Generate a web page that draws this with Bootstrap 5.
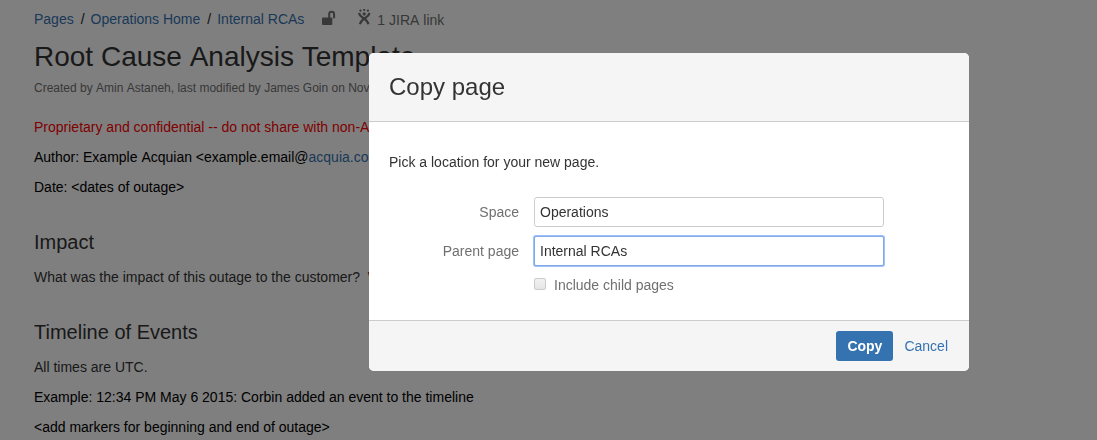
<!DOCTYPE html>
<html lang="en">
<head>
<meta charset="utf-8">
<meta name="viewport" content="width=device-width, initial-scale=1">
<title>Root Cause Analysis Template</title>
<link rel="stylesheet" href="https://cdn.jsdelivr.net/npm/bootstrap@5.3.0/dist/css/bootstrap.min.css">
<style>
  html, body { height: 100%; overflow: hidden; }
  body { font: 14px/20px "Liberation Sans", Arial, sans-serif; color: #333; background: #fff; }
  a { color: #3572b0; text-decoration: none; }
  .page { padding: 9px 34px 0; height: 440px; overflow: hidden; white-space: nowrap; }
  .page p { margin: 0 0 10px; }
  /* a space that is not kerned with the letters beside it */
  .sp { font-kerning: none; }
  .crumbs { --bs-breadcrumb-divider-color: #222; line-height: 20px; }
  .crumbs .breadcrumb-item + .breadcrumb-item { padding-left: 7px; }
  .crumbs .breadcrumb-item + .breadcrumb-item::before { padding-right: 6px; }
  .crumb-tools { color: #707070; }
  .jira-icon { margin-left: 21px; }
  .jira-count { padding-top: 1px; }
  .page-title { font-size: 28px; line-height: 34px; font-weight: 400; margin: 10px 0 0; }
  .page .page-meta { font-size: 12px; line-height: 16px; color: #707070; margin: 6px 0 21px; }
  .section-title { font-size: 20px; line-height: 30px; font-weight: 400; margin: 30px 0 10px; }
  .ink { color: #000; }
  .warn { color: #f00; }
  .modal-backdrop.show { opacity: .5; }
  .copy-dialog { width: 600px; max-width: none; margin: 53px 0 0 369px; }
  .copy-dialog .modal-content { border: 0; border-radius: 5px; overflow: hidden; height: 318px; color: #333; }
  .copy-dialog .modal-header { height: 69px; padding: 0 20px; background: #f5f5f5; border-bottom: 1px solid #ccc; border-radius: 0; }
  .copy-dialog .modal-title { font-size: 24px; line-height: 30px; font-weight: 400; }
  .copy-dialog .modal-body { padding: 30px 20px 0; }
  .copy-dialog .modal-footer { height: 51px; padding: 0 21px 0 20px; background: #f5f5f5; border-top: 1px solid #ccc; border-radius: 0; gap: 11px; }
  .copy-dialog .modal-footer > * { margin: 0; }
  .fields { margin-top: 25px; }
  .field-row + .field-row { margin-top: 9px; }
  .field-label { width: 130px; margin-right: 15px; color: #707070; text-align: right; }
  .field-input { width: 350px; height: 30px; padding: 0 5px; font-size: 14px; line-height: 20px; color: #333; border: 1px solid #ccc; border-radius: 3px; }
  .field-input.active { border-color: #83a9e8; box-shadow: 0 0 0 1px #9dc0f8; border-radius: 2px; color: #333; }
  .child-check { width: 12px; height: 12px; border: 1px solid #ccc; border-radius: 2px; background: linear-gradient(#f1f1f1, #e6e6e6); margin: 4px 0 0; appearance: none; }
  .child-label { color: #707070; margin: 1px 0 0 8px; }
  .btn-copy { height: 30px; width: 57px; padding: 0; font-size: 14px; line-height: 20px; font-weight: 700; color: #fff; background: #3572b0; border: 0; border-radius: 3px; }
</style>
</head>
<body>
<main class="page">
  <div class="d-flex">
    <ol class="breadcrumb crumbs mb-0 flex-nowrap">
      <li class="breadcrumb-item"><a href="#">Pages</a></li>
      <li class="breadcrumb-item"><a href="#">Operations Home</a></li>
      <li class="breadcrumb-item"><a href="#">Internal RCAs</a></li>
    </ol>
    <div class="crumb-tools d-flex">
      <svg class="ms-3" width="16" height="16" viewBox="0 0 16 16" aria-hidden="true">
        <rect x="2" y="8.500" width="10.300" height="7.500" rx="1" fill="currentColor"/>
        <path d="M9.200 9.500V5.300a2.450 2.450 0 0 1 4.900 0v4" fill="none" stroke="currentColor" stroke-width="2"/>
      </svg>
      <svg class="jira-icon" width="16" height="16" viewBox="0 0 16 16" aria-hidden="true">
        <g fill="currentColor"><circle cx="3.500" cy="1.700" r="1.100"/><circle cx="7.200" cy="1" r="1.100"/><circle cx="10.900" cy="1.700" r="1.100"/><circle cx="7.200" cy="4.900" r="1.600"/></g>
        <path d="M2 4Q2.700 7 5.500 8.500Q10.300 11 11.400 15.300M12.400 4Q11.700 7 8.900 8.500Q4.100 11 3 15.300" fill="none" stroke="currentColor" stroke-width="2.300"/>
      </svg>
      <span class="jira-count ms-1">1 JIRA<span class="sp"> </span>link</span>
    </div>
  </div>
  <h1 class="page-title">Root Cause<span class="sp"> </span>Analysis<span class="sp"> </span>Template</h1>
  <p class="page-meta">Created by<span class="sp"> </span>Amin<span class="sp"> </span>Astaneh, last modified by James Goin on Nov</p>
  <p class="warn">Proprietary and confidential -- do not share with non-A</p>
  <p class="ink">Author: Example<span class="sp"> </span>Acquian &lt;example.email@<a href="#">acquia.co</a></p>
  <p class="ink">Date: &lt;dates of outage&gt;</p>
  <h2 class="section-title">Impact</h2>
  <p>What was the impact of this outage to the customer? &nbsp;W</p>
  <h2 class="section-title">Timeline of Events</h2>
  <p>All times are UTC.</p>
  <p class="ink">Example: 12:34 PM May 6 2015: Corbin added an event to the timeline</p>
  <p class="ink">&lt;add markers for beginning and end of outage&gt;</p>
</main>

<div class="modal-backdrop show"></div>
<div class="modal show d-block" tabindex="-1" role="dialog" aria-labelledby="copy-title">
  <div class="modal-dialog copy-dialog">
    <div class="modal-content">
      <div class="modal-header"><h2 class="modal-title" id="copy-title">Copy page</h2></div>
      <div class="modal-body">
        <p class="mb-0">Pick a location for your new page.</p>
        <div class="fields">
          <div class="d-flex align-items-center field-row">
            <label class="field-label" for="space">Space</label>
            <input class="form-control field-input" id="space" value="Operations">
          </div>
          <div class="d-flex align-items-center field-row">
            <label class="field-label" for="parent">Parent page</label>
            <input class="form-control field-input active" id="parent" value="Internal RCAs">
          </div>
          <div class="d-flex align-items-start mt-2">
            <span class="field-label"></span>
            <input class="child-check" type="checkbox" id="children">
            <label class="child-label" for="children">Include child pages</label>
          </div>
        </div>
      </div>
      <div class="modal-footer">
        <button class="btn btn-copy" type="button">Copy</button>
        <a href="#">Cancel</a>
      </div>
    </div>
  </div>
</div>
<script src="https://cdn.jsdelivr.net/npm/bootstrap@5.3.0/dist/js/bootstrap.bundle.min.js"></script>
</body>
</html>
